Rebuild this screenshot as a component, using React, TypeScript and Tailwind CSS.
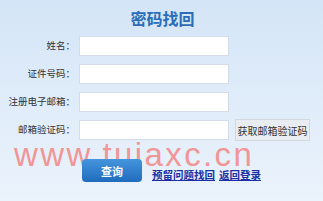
import React from "react";

const font = { fontFamily: '"Noto Sans CJK SC", "Liberation Sans", sans-serif' };

function Row({ label, extra }: { label: string; extra?: React.ReactNode }) {
  return (
    <div className="flex items-center h-[20px]">
      <div className="w-[77px] text-right text-[9.5px] text-[#333] pr-[2px] leading-none">{label}</div>
      <div className="w-[150px] h-[20px] ml-[2px] bg-white border border-[#d3dde8]"></div>
      {extra}
    </div>
  );
}

export default function App() {
  return (
    <div
      className="relative w-[323px] h-[201px] overflow-hidden bg-gradient-to-b from-[#d4e5f7] to-[#ebf3fc]"
      style={font}
    >
      <div
        className="absolute left-[14px] top-[137px] text-[33px] leading-[36px] text-[#f19696] tracking-[2.4px]"
        style={{ fontFamily: '"Liberation Sans", sans-serif' }}
      >
        www.tuiaxc.cn
      </div>
      <div className="relative flex flex-col">
        <div className="text-center text-[16px] leading-[20px] font-bold text-[#2b6db8] pt-[8px] pl-[2px]">密码找回</div>
        <div className="flex flex-col gap-[8px] mt-[8px]">
          <Row label="姓名：" />
          <Row label="证件号码：" />
          <Row label="注册电子邮箱：" />
          <Row
            label="邮箱验证码："
            extra={
              <div className="ml-[6px] w-[75px] h-[22px] flex items-center justify-center bg-[#e9edf1] border border-[#d2d8de] text-[10px] text-[#333]">
                获取邮箱验证码
              </div>
            }
          />
        </div>
        <div className="flex items-center mt-[19px] pl-[82px]">
          <div className="w-[60px] h-[23px] rounded-[4px] bg-gradient-to-b from-[#4595dd] to-[#1f6cbd] flex items-center justify-center text-white text-[11px] font-bold">
            查询
          </div>
          <div className="ml-[10px] mt-[8px] text-[10.5px] font-bold text-[#1a2ea6] flex gap-[4px]">
            <span className="underline">预留问题找回</span>
            <span className="underline">返回登录</span>
          </div>
        </div>
      </div>
    </div>
  );
}
